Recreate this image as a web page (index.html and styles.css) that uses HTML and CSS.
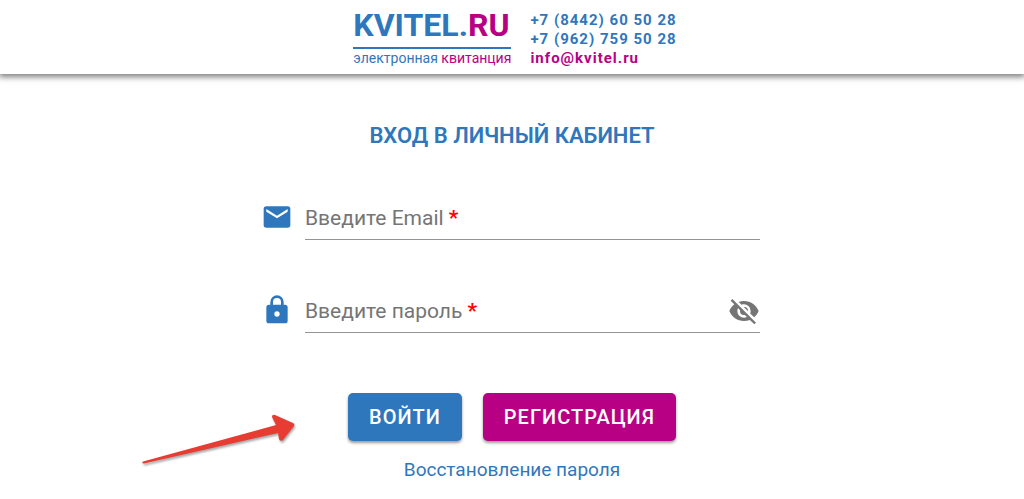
FILE: index.html
```html
<!DOCTYPE html>
<html lang="ru">
<head>
<meta charset="utf-8">
<meta name="viewport" content="width=device-width, initial-scale=1">
<title>KVITEL.RU</title>
<link rel="stylesheet" href="styles.css">
</head>
<body>
<header class="header">
  <a class="logo" href="#">
    <span class="logo-name">KVITEL.<span class="accent">RU</span></span>
    <span class="logo-tagline">электронная <span class="accent">квитанция</span></span>
  </a>
  <address class="contacts">
    <a href="tel:+78442605028">+7 (8442) 60 50 28</a>
    <a href="tel:+79627595028">+7 (962) 759 50 28</a>
    <a class="accent" href="mailto:info@kvitel.ru">info@kvitel.ru</a>
  </address>
</header>
<main class="main">
  <h1 class="title">ВХОД В ЛИЧНЫЙ КАБИНЕТ</h1>
  <form class="form">
    <div class="row">
      <svg class="icon" viewBox="0 0 24 24" aria-hidden="true"><path d="M20 4H4a2 2 0 0 0-2 2v12a2 2 0 0 0 2 2h16a2 2 0 0 0 2-2V6a2 2 0 0 0-2-2zm0 4-8 5-8-5V6l8 5 8-5z"/></svg>
      <div class="field">
        <input id="email" class="input" type="email" placeholder=" " required>
        <label class="label" for="email">Введите Email <span class="star">*</span></label>
      </div>
    </div>
    <div class="row">
      <svg class="icon" viewBox="0 0 24 24" aria-hidden="true"><path d="M12 17a2 2 0 1 0 0-4 2 2 0 0 0 0 4zm6-9a2 2 0 0 1 2 2v10a2 2 0 0 1-2 2H6a2 2 0 0 1-2-2V10a2 2 0 0 1 2-2h1V6a5 5 0 0 1 10 0v2zm-6-5a3 3 0 0 0-3 3v2h6V6a3 3 0 0 0-3-3z"/></svg>
      <div class="field">
        <input id="password" class="input" type="password" placeholder=" " required>
        <label class="label" for="password">Введите пароль <span class="star">*</span></label>
        <button class="toggle" type="button" aria-label="Показать пароль"><svg class="eye" viewBox="0 0 24 24" aria-hidden="true"><path d="M11.83 9 15 12.16V12a3 3 0 0 0-3-3zm-4.3.8 1.55 1.55C9.03 11.56 9 11.77 9 12a3 3 0 0 0 3 3c.22 0 .44-.03.65-.08l1.55 1.55c-.67.33-1.41.53-2.2.53a5 5 0 0 1-5-5c0-.79.2-1.53.53-2.2zM2 4.27l2.28 2.28.45.45C3.08 8.3 1.78 10 1 12c1.73 4.39 6 7.5 11 7.5 1.55 0 3.03-.3 4.38-.84l.43.42L19.73 22 21 20.73 3.27 3zM12 7a5 5 0 0 1 5 5c0 .64-.13 1.26-.36 1.82l2.93 2.93c1.5-1.25 2.7-2.89 3.43-4.75-1.73-4.39-6-7.5-11-7.5-1.4 0-2.74.25-4 .7l2.17 2.15C10.74 7.13 11.35 7 12 7z"/></svg></button>
      </div>
    </div>
    <div class="actions">
      <button class="btn" type="submit">ВОЙТИ</button>
      <button class="btn btn-accent" type="button">РЕГИСТРАЦИЯ</button>
      <svg class="arrow" viewBox="0 0 160 60" aria-hidden="true"><path d="M4 51.500 137 15l-4-8q0-3 3-2l18 8q2 1 1 3l-11 14q-3 2-4-1l-1-6L5 53.500q-3 0-1-2z"/></svg>
    </div>
    <a class="recover" href="#">Восстановление пароля</a>
  </form>
</main>
</body>
</html>
```
FILE: styles.css
```css
* { box-sizing: border-box; }
body {
  margin: 0;
  background: #fff;
  color: #2f77bd;
  font-family: Roboto, "Liberation Sans", sans-serif;
}
a { color: inherit; text-decoration: none; }
.header {
  display: flex;
  justify-content: center;
  gap: 19px;
  padding: 8px 0 6px 6px;
  box-shadow: 0 2px 6px 1px rgba(0, 0, 0, .5);
}
.logo { display: flex; flex-direction: column; }
.logo-name {
  border-bottom: 2px solid #2f77bd;
  padding-bottom: 4px;
  font-size: 32px;
  font-weight: 700;
  line-height: 35px;
}
.logo-tagline { font-size: 14px; line-height: 19px; }
.header .accent { color: #b80084; }
.contacts {
  display: flex;
  flex-direction: column;
  padding-top: 3px;
  font-size: 15px;
  font-style: normal;
  font-weight: 700;
  line-height: 19px;
  letter-spacing: 1px;
}
.main { padding: 46px 16px 16px; }
.title {
  margin: 0;
  font-size: 22px;
  font-weight: 600;
  line-height: 32px;
  text-align: center;
}
.form {
  display: flex;
  flex-direction: column;
  max-width: 502px;
  margin: 42px auto 0;
}
.row {
  display: flex;
  align-items: center;
  gap: 12px;
  margin-bottom: 47px;
}
.icon { width: 32px; height: 32px; fill: #2f77bd; }
.row .icon { flex: none; }
.field { position: relative; flex: 1; margin-right: 3px; }
.input {
  display: block;
  width: 100%;
  height: 46px;
  padding: 0 40px 0 0;
  border: 0;
  border-bottom: 1px solid #949494;
  background: none;
  font: 21px Roboto, "Liberation Sans", sans-serif;
  outline: 0;
}
.label {
  position: absolute;
  top: 8px;
  left: 0;
  color: #757575;
  font-size: 21px;
  line-height: 32px;
  pointer-events: none;
}
.input:not(:placeholder-shown) + .label { opacity: 0; }
.star { color: #f00; font-weight: 700; }
.toggle {
  position: absolute;
  top: 8px;
  right: 0;
  padding: 0;
  border: 0;
  background: none;
}
.eye { display: block; width: 32px; height: 32px; fill: #757575; }
.actions {
  position: relative;
  display: flex;
  justify-content: center;
  gap: 21px;
  margin-top: 13px;
}
.btn {
  height: 48px;
  padding: 0 21px;
  border: 0;
  border-radius: 5px;
  background: #2f77bd;
  box-shadow: 0 2px 3px rgba(0, 0, 0, .4);
  color: #fff;
  font: 500 20px Roboto, "Liberation Sans", sans-serif;
  letter-spacing: 1px;
}
.btn-accent { background: #b80084; }
.arrow {
  position: absolute;
  top: 17px;
  left: -122px;
  width: 160px;
  height: 60px;
  fill: #e63c32;
  filter: drop-shadow(1px 2px 1px rgba(0, 0, 0, .35));
}
.recover { align-self: center; margin-top: 16px; font-size: 19px; line-height: 26px; }
```
